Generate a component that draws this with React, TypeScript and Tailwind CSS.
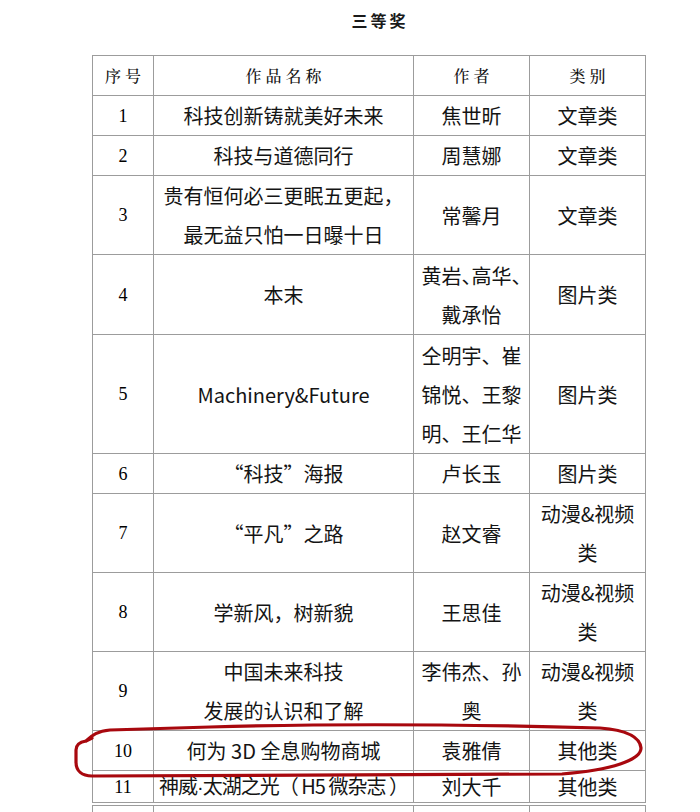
import React from 'react';

type Row = {
  no: string;
  title: React.ReactNode[];
  author: React.ReactNode[];
  kind: string[];
  h: string;
  lead?: string;
  titleClass?: string;
};

const cjk = '[font-family:"Noto_Sans_CJK_SC","Noto_Sans",sans-serif]';

const rows: Row[] = [
  { no: '1', title: ['科技创新铸就美好未来'], author: ['焦世昕'], kind: ['文章类'], h: 'h-[40px]' },
  { no: '2', title: ['科技与道德同行'], author: ['周慧娜'], kind: ['文章类'], h: 'h-[40px]' },
  { no: '3', title: ['贵有恒何必三更眠五更起，', '最无益只怕一日曝十日'], author: ['常馨月'], kind: ['文章类'], h: 'h-[78px]' },
  {
    no: '4',
    title: ['本末'],
    author: [
      <span key="a">
        黄岩<span className="tracking-[-10px]">、</span>高华<span className="tracking-[-10px]">、</span>
      </span>,
      '戴承怡',
    ],
    kind: ['图片类'],
    h: 'h-[80px]',
  },
  { no: '5', title: ['Machinery&Future'], author: ['仝明宇、崔', '锦悦、王黎', '明、王仁华'], kind: ['图片类'], h: 'h-[119px]' },
  { no: '6', title: ['“科技”海报'], author: ['卢长玉'], kind: ['图片类'], h: 'h-[40px]' },
  { no: '7', title: ['“平凡”之路'], author: ['赵文睿'], kind: ['动漫&视频', '类'], h: 'h-[79px]' },
  { no: '8', title: ['学新风，树新貌'], author: ['王思佳'], kind: ['动漫&视频', '类'], h: 'h-[79px]' },
  { no: '9', title: ['中国未来科技', '发展的认识和了解'], author: ['李伟杰、孙', '奥'], kind: ['动漫&视频', '类'], h: 'h-[79px]' },
  { no: '10', title: ['何为 3D 全息购物商城'], author: ['袁雅倩'], kind: ['其他类'], h: 'h-[40px]' },
  {
    no: '11',
    title: [
      <span key="t">
        神威<span className="[font-family:'Liberation_Sans',sans-serif]">·</span>太湖之光（ H5 微杂志 ）
      </span>,
    ],
    author: ['刘大千'],
    kind: ['其他类'],
    h: 'h-[31px]',
    lead: 'leading-[30px]',
    titleClass: '!px-0 tracking-[-1px]',
  },
];

const Lines: React.FC<{ items: React.ReactNode[]; lead?: string }> = ({ items, lead }) => (
  <>
    {items.map((t, i) => (
      <div key={i} className={`whitespace-nowrap ${lead ?? 'leading-[39px]'}`}>
        {t}
      </div>
    ))}
  </>
);

const cell = 'border border-[#9c9c9c] py-0 text-center align-middle';

const App: React.FC = () => {
  return (
    <div className="relative w-[700px] h-[812px] overflow-hidden bg-white text-[#141414]">
      <div className={`pt-[8px] pl-[60px] text-center text-[16px] leading-[24px] font-semibold tracking-[3px] text-[#1a1a1a] ${cjk}`}>
        三等奖
      </div>

      <div className="pl-[92px] mt-[23px]">
        <table className="w-[553px] table-fixed border-collapse">
          <colgroup>
            <col className="w-[61px]" />
            <col className="w-[260px]" />
            <col className="w-[116px]" />
            <col className="w-[116px]" />
          </colgroup>
          <thead>
            <tr className="h-[40px]">
              {['序号', '作品名称', '作者', '类别'].map((h) => (
                <th
                  key={h}
                  className={`${cell} px-0 pl-[4px] text-[16px] leading-[39px] font-medium tracking-[4px] text-[#111] [font-family:"Noto_Serif_CJK_SC","Noto_Sans_CJK_SC",serif]`}
                >
                  {h}
                </th>
              ))}
            </tr>
          </thead>
          <tbody>
            {rows.map((r) => (
              <tr key={r.no} className={r.h}>
                <td className={`${cell} px-0 text-[18px] leading-[24px] text-black [font-family:'Liberation_Serif',serif]`}>
                  {r.no}
                </td>
                <td className={`${cell} px-[7px] text-[20px] ${cjk} ${r.titleClass ?? ''}`}>
                  <Lines items={r.title} lead={r.lead} />
                </td>
                <td className={`${cell} px-[6px] text-[20px] ${cjk}`}>
                  <Lines items={r.author} lead={r.lead} />
                </td>
                <td className={`${cell} px-[4px] text-[20px] ${cjk}`}>
                  <Lines items={r.kind} lead={r.lead} />
                </td>
              </tr>
            ))}
          </tbody>
        </table>
        <table className="mt-[2px] w-[553px] table-fixed border-collapse">
          <colgroup>
            <col className="w-[61px]" />
            <col className="w-[260px]" />
            <col className="w-[116px]" />
            <col className="w-[116px]" />
          </colgroup>
          <tbody>
            <tr className="h-[40px]">
              <td className="border border-[#9c9c9c]" />
              <td className="border border-[#9c9c9c]" />
              <td className="border border-[#9c9c9c]" />
              <td className="border border-[#9c9c9c]" />
            </tr>
          </tbody>
        </table>
      </div>

      {/* red hand-drawn mark around row 10 */}
      <svg className="absolute left-0 top-0 pointer-events-none" width="700" height="812" viewBox="0 0 700 812" fill="none">
        <path
          d="M86 741 C92 735 98 731 110 730 L210 727 Q380 722 600 728 C624 730 640 736 641 748 C641 760 612 770 562 774 L92 776 C82 776 76 771 76 762 L76 750 C76 745 80 742 86 741 L92 738"
          stroke="#a8080e"
          strokeWidth={3.2}
          strokeLinecap="round"
          strokeLinejoin="round"
        />
      </svg>
    </div>
  );
};

export default App;
